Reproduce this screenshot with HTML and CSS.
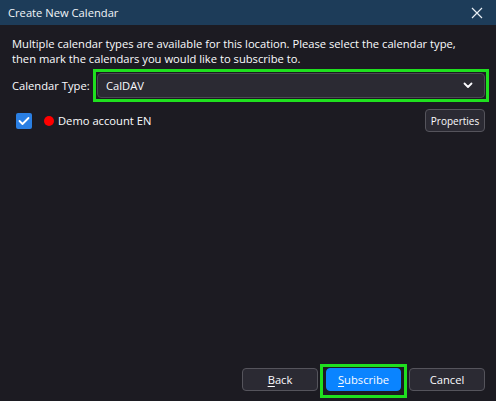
FILE: index.html
```html
<!DOCTYPE html>
<html>
<head>
<meta charset="utf-8">
<link rel="stylesheet" href="styles.css">
</head>
<body>
<div class="window">
  <div class="titlebar">
    <span class="title">Create New Calendar</span>
    <svg class="close" width="12" height="12" viewBox="0 0 12 12"><path d="M1 1L11 11M11 1L1 11" stroke="#e8eef4" stroke-width="1.2" fill="none"/></svg>
  </div>
  <div class="content">
    <p class="desc">Multiple calendar types are available for this location. Please select the calendar type, then mark the calendars you would like to subscribe to.</p>
    <div class="type-row">
      <span class="label">Calendar Type:</span>
      <div class="hl-select">
        <div class="select">
          <span>CalDAV</span>
          <svg width="10" height="7" viewBox="0 0 10 7"><path d="M1.5 1.5L5 5L8.5 1.5" stroke="#fbfbfe" stroke-width="1.8" fill="none" stroke-linecap="round" stroke-linejoin="round"/></svg>
        </div>
      </div>
    </div>
    <div class="cal-row">
      <span class="checkbox"><svg width="12" height="10" viewBox="0 0 12 10"><path d="M1.5 5L4.5 8L10.5 2" stroke="#fff" stroke-width="1.8" fill="none" stroke-linecap="round" stroke-linejoin="round"/></svg></span>
      <span class="dot"></span>
      <span class="cal-name">Demo account EN</span>
      <span class="spacer"></span>
      <button class="btn small">Properties</button>
    </div>
    <div class="grow"></div>
    <div class="footer">
      <button class="btn"><u>B</u>ack</button>
      <div class="hl-btn"><button class="btn primary"><u>S</u>ubscribe</button></div>
      <button class="btn">Cancel</button>
    </div>
  </div>
</div>
</body>
</html>
```
FILE: styles.css
```css
html, body {
  margin: 0;
  padding: 0;
  background: #1c1b22;
}
.window {
  width: 496px;
  height: 401px;
  display: flex;
  flex-direction: column;
  font-family: "Open Sans", "Noto Sans", sans-serif;
  font-size: 11.2px;
  color: #fbfbfe;
}
.titlebar {
  height: 25px;
  background: #1d3c59;
  display: flex;
  align-items: center;
  padding: 0 13px 0 8px;
  flex: none;
}
.title {
  flex: 1;
  color: #f2f5f8;
}
.close {
  display: block;
}
.content {
  flex: 1;
  display: flex;
  flex-direction: column;
  padding: 11px 7px 3px 12px;
}
.desc {
  margin: 0;
  line-height: 15px;
  max-width: 455px;
}
.type-row {
  display: flex;
  align-items: center;
  margin-top: 3px;
}
.label {
  width: 81px;
  flex: none;
}
.hl-select {
  flex: 1;
  border: 3px solid #1fe01f;
  padding: 1px;
}
.select {
  height: 25px;
  box-sizing: border-box;
  background: #2b2a33;
  border: 1px solid #4a4952;
  border-radius: 4px;
  display: flex;
  align-items: center;
  justify-content: space-between;
  padding: 0 11px 0 8px;
}
.select svg {
  display: block;
}
.cal-row {
  display: flex;
  align-items: center;
  margin-top: 7px;
  padding-left: 4px;
  padding-right: 4px;
}
.checkbox {
  width: 16px;
  height: 16px;
  border-radius: 2px;
  background: #2a7fe3;
  display: flex;
  align-items: center;
  justify-content: center;
  flex: none;
}
.checkbox svg { display: block; }
.dot {
  width: 10px;
  height: 10px;
  border-radius: 50%;
  background: #ff0000;
  margin-left: 12px;
  flex: none;
}
.cal-name {
  margin-left: 4px;
}
.spacer { flex: 1; }
.btn {
  font-family: "Open Sans", "Noto Sans", sans-serif;
  font-size: 11.2px;
  color: #fbfbfe;
  background: #2b2a33;
  border: 1px solid #55545c;
  border-radius: 4px;
  width: 76px;
  height: 23px;
  padding: 0;
  box-sizing: border-box;
  display: block;
}
.btn.small {
  width: 60px;
  font-size: 10px;
}
.btn.primary {
  background: #0a84ff;
  border-color: #0a84ff;
  width: 75px;
}
.hl-btn {
  border: 3px solid #1fe01f;
  padding: 1px 3px 4px 3px;
}
.grow { flex: 1; }
.footer {
  display: flex;
  justify-content: flex-end;
  align-items: flex-start;
  gap: 2px;
  padding-right: 4px;
}
.footer > .btn {
  margin-top: 4px;
}
.btn u { text-underline-offset: 2px; }
```
